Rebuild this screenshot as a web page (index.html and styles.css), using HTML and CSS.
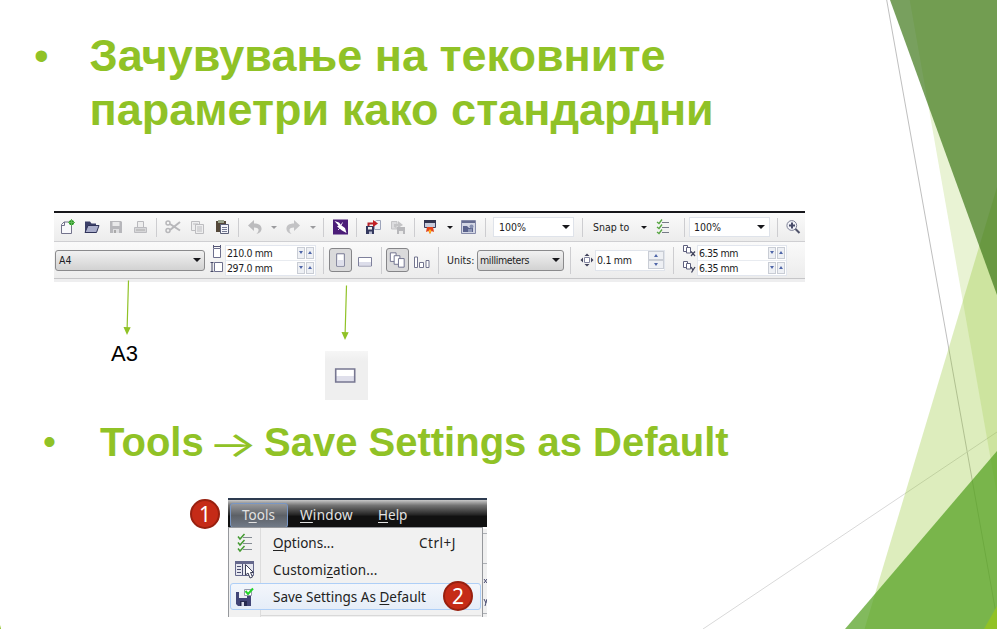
FILE: index.html
```html
<!DOCTYPE html>
<html lang="mk">
<head>
<meta charset="utf-8">
<title>Зачувување на тековните параметри</title>
<link rel="stylesheet" href="styles.css">
</head>
<body>
<main class="slide">
  <svg class="backdrop" viewBox="0 0 997 629" aria-hidden="true">
    <path d="M886.7 0L943.7 320L997.500 622" fill="none" stroke="#bfbfbf"/>
    <path d="M703 629L997 432" stroke="#d9d9d9"/>
    <path d="M909.7 0H997V495Z" fill="#90c226" fill-opacity=".2"/>
    <path d="M997 187V629H864.5Z" fill="#90c226" fill-opacity=".3"/>
    <path d="M890 0H997V295Z" fill="#3f7819" fill-opacity=".7"/>
    <path d="M997 451V629H845Z" fill="#54a021" fill-opacity=".73"/>
    <path d="M997 606V629H984Z" fill="#90c226"/>
    <path d="M0 625L1 629H0Z" fill="#90c226"/>
  </svg>

  <h1 class="title"><span class="dot">•</span><span class="title-text"><span class="l1">Зачувување на тековните</span><br><span class="l2">параметри како стандардни</span></span></h1>

  <section class="toolbars">
    <div class="row standard">
      <svg class="ic" viewBox="0 0 18 18"><path d="M2.5 6.5L5 4H12.500V15.500H2.500Z" fill="#f8f8fb" stroke="#73738c"/><path d="M2.500 7.500H5.500V4" fill="none" stroke="#73738c"/><circle cx="12.500" cy="4.500" r="2.600" fill="#289a22"/><path d="M12.500 1V8M9 4.500H16" stroke="#61b557"/></svg>
      <svg class="ic" viewBox="0 0 18 18"><path d="M2 14V3.500H7L8.500 5.500H13V8" fill="#3b3f68"/><path d="M2 14.500L5 7.500H16L13.500 14.500Z" fill="#a9adca" stroke="#2f3359"/></svg>
      <svg class="ic" viewBox="0 0 18 18"><path d="M2 3H13L14 4V15H2Z" fill="#b7b7bb"/><path d="M4.500 4H11.500V8H4.500Z" fill="#e9e9ea"/><path d="M5 11H11V15H5Z" fill="#dedee0"/><path d="M6 12H8V15H6Z" fill="#aaa"/></svg>
      <svg class="ic" viewBox="0 0 18 18"><path d="M4.500 9V3.500H10.500V9" fill="#eee" stroke="#b9b9bd"/><path d="M1.500 9.500H13.500V14.500H1.500Z" fill="#d7d7d9" stroke="#bcbcc0"/><path d="M3 12H12" stroke="#aaa"/></svg>
      <i class="sep"></i>
      <svg class="ic" viewBox="0 0 18 18" fill="none" stroke="#b7b7ba"><path d="M5 6L15 12.500M5 12L15 4" stroke-width="2"/><circle cx="3" cy="5" r="2" stroke-width="1.500"/><circle cx="3" cy="12.500" r="2" stroke-width="1.500"/></svg>
      <svg class="ic" viewBox="0 0 18 18" fill="#eeeeef" stroke="#bdbdc0"><path d="M1.500 3.500H9.500V12.500H1.500Z"/><path d="M5.500 6.500H13.500V15.500H5.500Z"/><path d="M7 9H12M7 11H12M7 13H12M3 6H8"/></svg>
      <svg class="ic" viewBox="0 0 18 18"><path d="M1 3H11V14H1Z" fill="#54483a"/><path d="M3 2H9V5H3Z" fill="#9ba38d"/><path d="M5.500 6.500H13.500V15.500H5.500Z" fill="#f4f5fa" stroke="#5b6078"/><path d="M7 9.500H12M7 11.500H12M7 13.500H12" stroke="#747a93"/></svg>
      <i class="sep"></i>
      <svg class="ic" viewBox="0 0 18 18"><path d="M1 7.500L7 2V5.500C12 5.500 15 7.500 14.500 11.500Q14 14.500 9.500 16Q12 13.500 11.500 11.500Q11 9.500 7 9.500V13Z" fill="#bcbcbe"/></svg>
      <i class="tri dim"></i>
      <svg class="ic" viewBox="0 0 18 18"><path d="M15 7.500L9 2V5.500C4 5.500 1 7.500 1.500 11.500Q2 14.500 6.500 16Q4 13.500 4.500 11.500Q5 9.500 9 9.500V13Z" fill="#c3c3c5"/></svg>
      <i class="tri dim"></i>
      <i class="sep"></i>
      <svg class="ic" viewBox="0 0 18 18"><path d="M0 1.500H15V16.500H0Z" fill="#4b1d78"/><path d="M1.500 3L6 4.500L8.500 7.500L12 10L13.500 15L9 12.500L6.500 10.500L4 8.500L5.500 7.500Z" fill="#fff"/><path d="M9.500 4.500L8 7.500M5 12L7 10" stroke="#e4d9ee"/></svg>
      <i class="sep"></i>
      <svg class="ic" viewBox="0 0 18 18"><path d="M9.500 4L11.500 2.500H15.500V11.500H9.500Z" fill="#eef1f7" stroke="#9da4ba"/><path d="M1 8H9V16H1Z" fill="#34385e"/><path d="M3 9H7V11.500H3Z" fill="#eee"/><path d="M4 13.500H7V16H4Z" fill="#b6bad0"/><path d="M3.500 8V5.500H9" fill="none" stroke="#b5232b" stroke-width="2"/><path d="M8 2L13 5.500L8 9Z" fill="#c32027"/></svg>
      <svg class="ic" viewBox="0 0 18 18"><path d="M1.500 3.500H7V11H1.500Z" fill="#dcdcde" stroke="#c4c4c6"/><path d="M4 9V6H8V3L13 7L8 10V8H6V10" fill="#c4c4c6"/><path d="M7 9H15V16H7Z" fill="#b8b8bb"/><path d="M9 13H13V16H9Z" fill="#e9e9e9"/></svg>
      <i class="sep"></i>
      <svg class="ic" viewBox="0 0 18 18"><path d="M1.500 2.500H12.500V9.500H1.500Z" fill="#c7cadb" stroke="#3b3e5e"/><path d="M1 2H13V5H1Z" fill="#31344f"/><path d="M4 9H10L11 14L8.500 13L7 16L5.500 13L3 14Z" fill="#e3411c"/><path d="M7 11L8.500 13L7 16L5.500 13Z" fill="#ffb31d"/></svg>
      <i class="tri"></i>
      <svg class="ic" viewBox="0 0 18 18"><path d="M.5 2.500H14.500V15.500H.5Z" fill="#d4d7e5" stroke="#868ba9"/><path d="M1 3H14V5H1Z" fill="#666c90"/><path d="M2 8H6L8 10H12V14H2Z" fill="#5a628c"/><circle cx="10.500" cy="8.500" r="2" fill="#8790b1"/><path d="M7 11H11V14H7Z" fill="#8d96b5"/></svg>
      <i class="sep"></i>
      <div class="combo light w1"><span>100%</span><i class="tri big"></i></div>
      <i class="sep"></i>
      <span class="txt snap">Snap to</span>
      <i class="tri"></i>
      <svg class="ic" viewBox="0 0 18 18" fill="none"><path d="M6 4.500H13M6 9.500H13M6 14.500H13" stroke="#777b87"/><path d="M1 4L3 5.500L6 1.500M1 9L3 10.500L6 6.500M1 14L3 15.500L6 11.500" stroke="#58a643" stroke-width="1.300"/></svg>
      <i class="sep"></i>
      <div class="combo light w2"><span>100%</span><i class="tri big"></i></div>
      <i class="sep"></i>
      <svg class="ic" viewBox="0 0 18 18" fill="none"><circle cx="5.800" cy="7.500" r="4.900" fill="#f2f3f8" stroke="#7d8096"/><path d="M3 7.500H9M6 4.500V10.500" stroke="#474b68" stroke-width="2"/><path d="M9.500 11L13.500 15" stroke="#50536b" stroke-width="2"/></svg>
    </div>

    <div class="row property">
      <div class="combo grey paper"><span>A4</span><i class="tri big"></i></div>
      <svg class="dims" viewBox="0 0 15 32"><path d="M3.500 4.500H10.500V13.500H3.500Z" fill="#fff" stroke="#6d6f8d"/><path d="M3 2.500H11M3.500 1V4M10.500 1V4" stroke="#555776"/><path d="M4.500 18.500H12.500V27.500H4.500Z" fill="#fff" stroke="#6d6f8d"/><path d="M2 18V28M.5 18.500H3.500M.5 27.500H3.500" stroke="#454766"/></svg>
      <div class="fields f1">
        <div><span>210.0 mm</span><b class="dn"></b><b class="up"></b></div>
        <div><span>297.0 mm</span><b class="dn"></b><b class="up"></b></div>
      </div>
      <i class="sep tall"></i>
      <div class="press"><svg viewBox="0 0 22 22"><path d="M7 4.500H15V17.500H7Z" fill="#fff" stroke="#6f718e"/><path d="M7.500 11H14.500V17H7.500Z" fill="#dfe0ec"/></svg></div>
      <svg class="ic land" viewBox="0 0 18 18"><path d="M1.500 5.500H14.500V14H1.500Z" fill="#fff" stroke="#7e809b"/><path d="M2 10H14V13.500H2Z" fill="#dcddea"/></svg>
      <i class="sep tall"></i>
      <div class="press"><svg viewBox="0 0 22 22" fill="#fff" stroke="#6f718e"><path d="M3.500 3.500H9.500V12.500H3.500Z"/><path d="M7.500 6.500H13.500V15.500H7.500Z"/><path d="M12 9.500H18V18.500H12Z"/></svg></div>
      <svg class="ic land" viewBox="0 0 18 18" fill="#fff" stroke="#73758f"><path d="M.5 5H3.500V15.500H.5Z"/><path d="M5.500 10.500H9.500V15.500H5.500Z"/><path d="M12 8.500H15V15.500H12Z"/></svg>
      <i class="sep tall"></i>
      <span class="txt units">Units:</span>
      <div class="combo grey unitbox"><span>millimeters</span><i class="tri big"></i></div>
      <i class="sep tall"></i>
      <svg class="nudge" viewBox="0 0 14 16"><path d="M4.500 5.500H9.500V10.500H4.500Z" fill="#fff" stroke="#8385a0"/><path d="M7 1.500L9.500 4H4.500ZM7 14.500L4.500 12H9.500ZM.5 8L3 5.500V10.500ZM13.500 8L11 10.500V5.500Z" fill="#41435c"/></svg>
      <div class="spinner"><span>0.1 mm</span><em><b class="up"></b><b class="dn"></b></em></div>
      <i class="sep tall"></i>
      <svg class="dims" viewBox="0 0 15 32"><g fill="#fff" stroke="#5e607e"><path d="M1.500 1.500H5.500V7.500H1.500Z"/><path d="M4.500 3.500H8.500V9H4.500Z"/><path d="M1.500 17.500H5.500V23.500H1.500Z"/><path d="M4.500 19.500H8.500V25H4.500Z"/></g><path d="M9 7.500L13 12M13 7.500L9 12M9 23L11 26L13 23M11 26L9.500 28.500" stroke="#41435c" stroke-width="1.300" fill="none"/></svg>
      <div class="fields f2">
        <div><span>6.35 mm</span><b class="dn"></b><b class="up"></b></div>
        <div><span>6.35 mm</span><b class="dn"></b><b class="up"></b></div>
      </div>
    </div>
    <div class="ruler"></div>
  </section>

  <section class="notes">
    <p class="a3">A3</p>
    <div class="landscape"><svg viewBox="0 0 43 49"><path d="M10.700 18H29.700V31H10.700Z" fill="#fff"/><path d="M11 25H29V31H11Z" fill="#dfdfeb"/><path d="M10.700 18H29.700V31H10.700Z" fill="none" stroke="#777791" stroke-width="1.600"/></svg></div>
  </section>
  <svg class="arrows" viewBox="0 0 997 629" aria-hidden="true"><path d="M128.500 280.500L127.100 329M346.500 285.500L345.100 334" stroke="#90c226" stroke-width="1.200"/><path d="M123.500 327L130.700 327.200L127 335ZM341.500 332L348.700 332.200L345 340Z" fill="#90c226"/></svg>

  <h2 class="step"><span class="dot">•</span><span class="s1">Tools</span><span class="to">→</span><span class="s2">Save Settings as Default</span></h2>

  <section class="demo">
    <span class="badge one">1</span>
    <div class="window">
      <nav class="menubar"><span class="open">T<u>o</u>ols</span><span class="mw"><u>W</u>indow</span><span class="mh"><u>H</u>elp</span></nav>
      <div class="body">
        <div class="menu">
          <div class="item"><svg viewBox="0 0 20 20" fill="none"><path d="M8 4.500H17M8 10.500H17M8 16.500H17" stroke="#858c94"/><path d="M3 3.500L5 6L9.500 1M3 9.500L5 12L9.500 7M3 15.500L5 18L9.500 13" stroke="#439a31" stroke-width="1.500"/></svg><span class="t1"><u>O</u>ptions...</span><kbd>Ctrl+J</kbd></div>
          <div class="item"><svg viewBox="0 0 20 20"><path d="M.5 1.500H18.500V15.500H.5Z" fill="#e6e7ef" stroke="#65688c"/><path d="M0 1H19V4H0Z" fill="#65688c"/><path d="M7.500 4V15M2 6.500H6M2 9.500H6M2 12.500H6" stroke="#4b4e70"/><path d="M10.500 4.500V15L13 13L15 18L17.500 17L15.500 12.500H18.500Z" fill="#fff" stroke="#3d4058"/></svg><span class="t2">Customi<u>z</u>ation...</span></div>
          <div class="item hot"><svg viewBox="0 0 20 20"><path d="M1 5H16V19H3L1 17Z" fill="#414577"/><path d="M4 5H12V11H4Z" fill="#eceef5"/><path d="M5 14H12V19H5Z" fill="#262a50"/><path d="M6.500 15H9V19H6.500Z" fill="#d8daea"/><path d="M9.500 2.500H16.500V8.500H9.500Z" fill="#fff" stroke="#969aac"/><path d="M10.500 4L13 7L18 1.500" fill="none" stroke="#24d42a" stroke-width="2"/></svg><span class="t3">Save Settings As <u>D</u>efault</span><span class="badge two">2</span></div>
          <div class="rule"></div>
        </div>
        <svg class="edge" viewBox="0 0 4 90"><path d="M0 0H4V2H0Z" fill="#fff"/><path d="M0 6.500H4M0 36.500H4M0 86.500H4" stroke="#adb0b5"/><path d="M1 52L4 56M4 52L1 56M1 72L3 76M4 72L2 79" stroke="#484b70"/></svg>
      </div>
    </div>
  </section>
</main>
</body>
</html>
```
FILE: styles.css
```css
* { box-sizing: border-box; }
body { margin: 0; background: #fff; }
.slide { position: relative; width: 997px; height: 629px; overflow: hidden; font-family: "Liberation Sans", Arial, sans-serif; }
.backdrop, .arrows { position: absolute; left: 0; top: 0; width: 997px; height: 629px; pointer-events: none; }
h1, h2, p { margin: 0; }
.title, .step { color: #90c226; font-weight: bold; display: flex; white-space: nowrap; }
.title { padding: 29px 0 0 34px; height: 211px; font-size: 45px; line-height: 54px; }
.dot { font-weight: normal; }
.title .dot { width: 55.500px; font-size: 42px; }

.toolbars { width: 751px; height: 71px; margin-left: 54px; border-top: 2px solid #17171b; background: #f0f0f0; font: 10.500px "DejaVu Sans Condensed", "DejaVu Sans", sans-serif; font-stretch: condensed; color: #1c1c22; }
.row { display: grid; align-items: center; background: linear-gradient(#fafafa, #ececec); white-space: nowrap; }
.standard { height: 29px; padding-left: 5px; border-bottom: 1px solid #cfcfd2; grid-template-columns: 24px 25px 25px 23px 9px 25px 25px 23px 9px 24px 14px 25px 13px 10px 23px 9px 25px 24px 9px 24px 14px 24px 8px 89px 11px 48px 15px 28px 5px 88px 9px 19px; }
.property { height: 37px; padding-left: 1px; border-bottom: 1px solid #c6c6c8; grid-template-columns: 155px 15px 98px 6px 28px 24px 5px 28px 24px 9px 30px 93px 10px 15px 78px 9px 15px 108px; }
.ruler { height: 3px; background: #eeeeef; }
.ic { width: 18px; height: 18px; }
.land { margin-top: 1px; }
.sep { width: 1px; height: 19px; background: #cdcdd0; }
.sep.tall { height: 27px; }
.tri { border: 3px solid transparent; border-top: 3px solid #17171b; border-bottom: 0; width: 0; height: 0; }
.tri.dim { border-top-color: #9b9b9e; }
.tri.big { border-width: 4px 4px 0; }
.combo { display: flex; align-items: center; justify-content: space-between; }
.light { height: 20px; background: #fff; border: 1px solid #dfe3ea; padding: 0 3px 0 5px; }
.w1, .w2 { width: 81px; }
.w2 { padding-right: 4px; padding-left: 4px; }
.grey { height: 21px; border: 1px solid #8a8a8c; border-radius: 3px; background: linear-gradient(#f1f1f1, #d2d2d2); padding: 0 3px; }
.paper { width: 150px; }
.unitbox { width: 87px; padding-left: 2px; }
.unitbox span { letter-spacing: -.35px; }
.dims { width: 15px; height: 32px; }
.fields { display: grid; gap: 1px; height: 31px; border: 1px solid #e2e6ee; background: #e8ebf0; letter-spacing: -.4px; }
.f1 { width: 91px; }
.f2 { width: 90px; letter-spacing: -.5px; }
.fields div { display: flex; align-items: center; gap: 1px; background: #fff; padding: 0 1px 0 1px; height: 14px; }
.fields span { flex: 1; }
.fields b, .spinner b { display: grid; place-items: center; width: 8px; height: 12px; border: 1px solid #c9cdd5; background: #eef0f4; }
.dn::after, .up::after { content: ""; border: 2px solid transparent; }
.dn::after { border-top: 3px solid #4f66a8; border-bottom: 0; }
.up::after { border-bottom: 3px solid #4f66a8; border-top: 0; }
.press { width: 23px; height: 24px; border: 1px solid #858588; border-radius: 3px; background: #dadadb; }
.press svg { width: 21px; height: 22px; display: block; }
.nudge { width: 14px; height: 16px; }
.spinner { display: flex; align-items: center; justify-content: space-between; width: 70px; height: 21px; background: #fff; border: 1px solid #e0e4eb; padding-left: 1px; letter-spacing: -.3px; }
.spinner b { width: 16px; height: 9px; }

.notes { display: flex; align-items: flex-start; height: 133px; padding-top: 58px; }
.a3 { width: 214px; margin-left: 111px; padding-top: 1px; font-size: 22px; line-height: 26px; color: #000; }
.landscape { width: 43px; height: 49px; margin-top: 11px; background: linear-gradient(#f6f6f6, #efefef 20%); }
.landscape svg { width: 43px; height: 49px; display: block; }

.step { height: 83px; padding-left: 43px; font-size: 40px; line-height: 54px; }
.step .dot { width: 57px; font-size: 37px; }
.s1 { width: 112px; }
.to { width: 52px; font-family: Inter, sans-serif; font-weight: 400; font-size: 41px; transform: translate(-4px, 2px) scale(1.270, .860); transform-origin: 0 31px; }

.demo { display: flex; height: 119px; padding-left: 190px; font-family: "Noto Sans", "Open Sans", sans-serif; font-size: 13.500px; color: #222; white-space: nowrap; }
.badge { display: grid; place-items: center; width: 30px; height: 30px; border-radius: 50%; border: 2px solid #98200f; background: #c52b17; color: #fff; font-size: 21px; line-height: 26px; }
.one { margin: 1px 8px 0 0; }
.window { width: 259px; height: 119px; }
.menubar { display: flex; height: 29px; padding: 3px 0 0 2px; border-top: 2px solid #2d3b50; background: linear-gradient(#c8c8c8, #747474 20%, #242424 55%, #111 60%); color: #e2e2e2; line-height: 24px; }
.open { width: 58px; height: 25px; padding-left: 11px; border: 1px solid #7896c4; border-radius: 3px; background: linear-gradient(#98999b, #5c6066 50%, #717a87); line-height: 23px; }
.mw { width: 78px; margin-left: 12px; letter-spacing: .3px; }
u { text-underline-offset: 2px; text-decoration-thickness: 1px; }
.body { display: flex; height: 90px; background: #f0f0f0; }
.menu { width: 255px; border: 1px solid #96989c; border-bottom: 0; padding: 1px 1px 0; background: linear-gradient(90deg, #f1f1f1 31px, #dcdcdc 31px, #dcdcdc 32px, #f1f1f1 32px); }
.item { display: flex; align-items: center; height: 27px; padding-left: 5px; line-height: 18px; }
.item svg { width: 20px; height: 20px; margin-right: 18px; }
.item span:not(.badge), kbd { padding-top: 1px; }
.t1 { width: 146px; }
kbd { font: inherit; letter-spacing: .5px; }
.t2 { letter-spacing: .15px; }
.hot { border: 1px solid #aecff7; border-radius: 3px; background: linear-gradient(#f3f6fb, #e5edf8); padding-left: 4px; }
.t3 { width: 170px; }
.two { margin-top: -1px; flex: none; }
.rule { height: 1px; margin: 5px 0 0 31px; background: #d9d9d9; }
.edge { width: 4px; height: 90px; }
```
